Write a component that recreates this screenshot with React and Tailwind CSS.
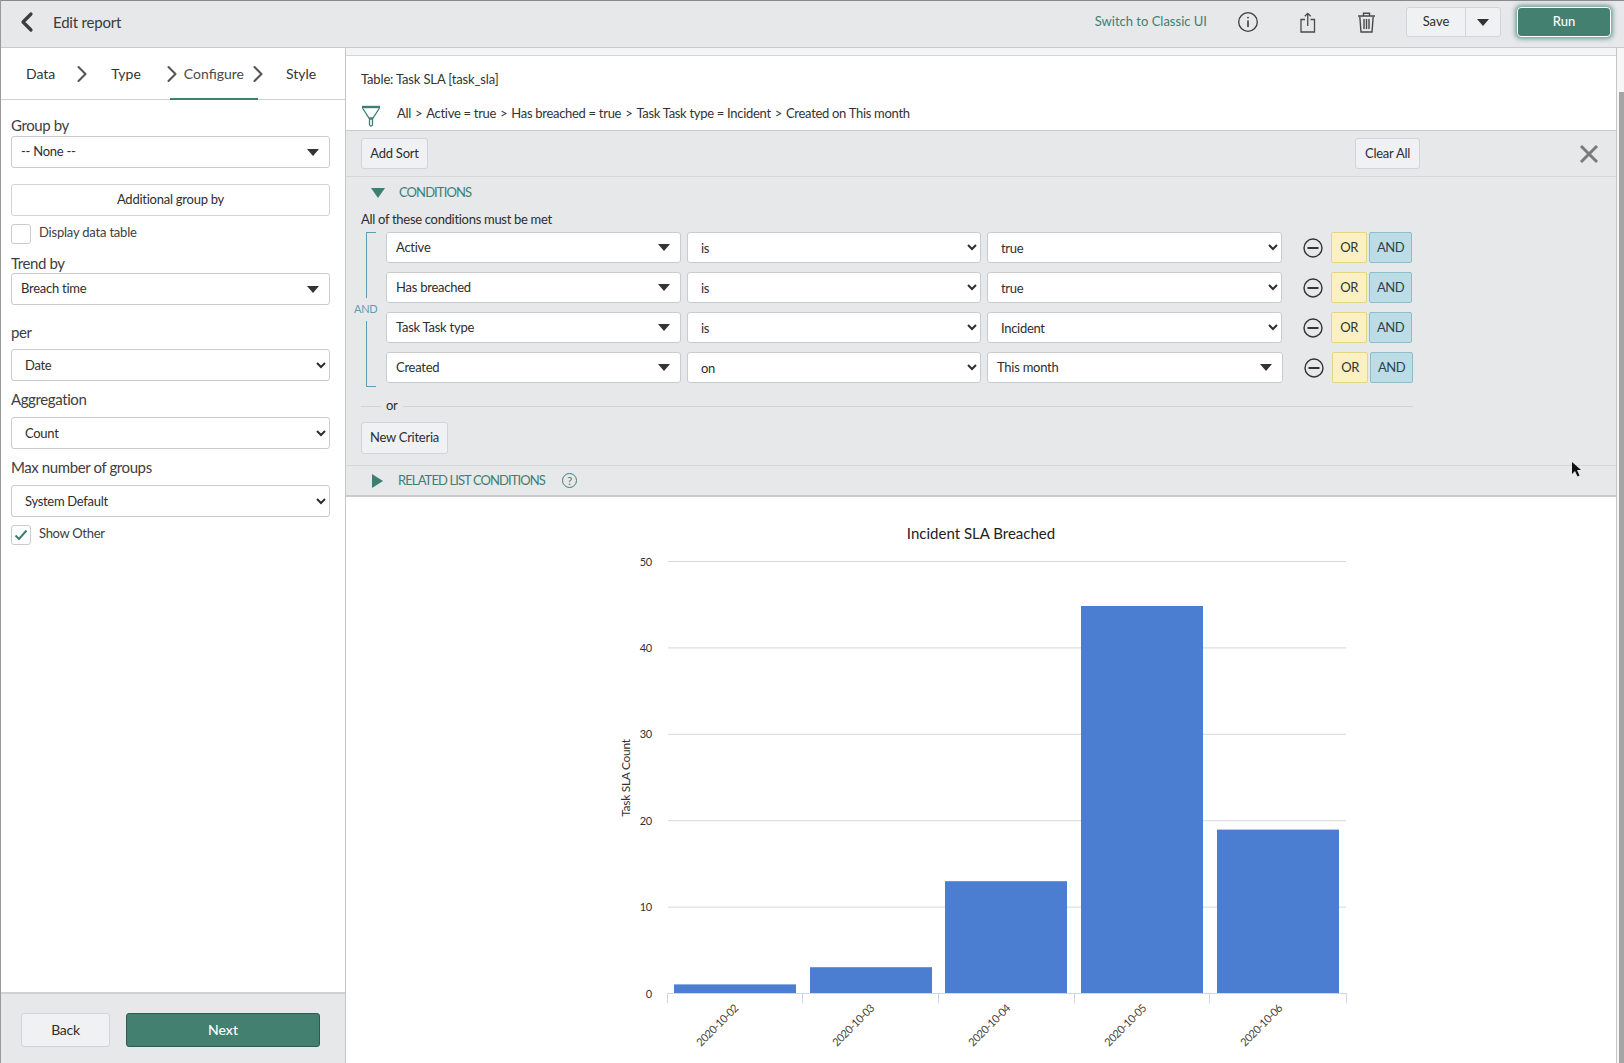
import { ChevronLeft, ChevronRight } from 'lucide-react';

// ── Helpers ───────────────────────────────────────────────────────────────────
const FONT = "font-['Lato','Noto_Sans',sans-serif]";

const Caret = () => (
  <span className="w-0 h-0 border-x-[6px] border-x-transparent border-t-[7px] border-t-[#333]" />
);

const ComboBox = ({ value, className = '' }) => (
  <div className={`flex items-center justify-between bg-white border border-[#c9cccf] rounded-[3px] pl-[9px] pr-[10px] h-[32px] text-[13px] tracking-[-0.25px] text-[#2e2e2e] ${className}`}>
    <span>{value}</span>
    <Caret />
  </div>
);

const NativeSelect = ({ value, className = '' }) => (
  <select
    defaultValue={value}
    className={`bg-white border border-[#c9cccf] rounded-[3px] pl-[9px] text-[13px] tracking-[-0.3px] text-[#2e2e2e] ${className}`}
  >
    <option>{value}</option>
  </select>
);

const Label = ({ children, className = '' }) => (
  <div className={`text-[15px] leading-[20px] tracking-[-0.4px] text-[#404040] ${className}`}>{children}</div>
);

const Btn = ({ children, className = '' }) => (
  <button className={`bg-[#f0f1f3] border border-[#d2d4d7] rounded-[3px] text-[13px] tracking-[-0.25px] text-[#2e2e2e] ${className}`}>
    {children}
  </button>
);

const CheckBox = ({ checked }) => (
  <span className="flex items-center justify-center w-[20px] h-[20px] bg-white border border-[#c9cccf] rounded-[3px]">
    {checked && (
      <svg width="14" height="12" viewBox="0 0 14 12" fill="none" stroke="#3f7f72" strokeWidth="2">
        <path d="M1.5 6.5 5 10l7.5-8.5" />
      </svg>
    )}
  </span>
);

const TabChevron = ({ className = '' }) => (
  <ChevronRight className={`w-[28px] h-[28px] -mx-[4px] text-[#555] ${className}`} strokeWidth={1.8} />
);

// ── Top bar icons ─────────────────────────────────────────────────────────────
const InfoIcon = () => (
  <svg width="22" height="22" viewBox="0 0 22 22" fill="none" stroke="#3c3c3c" strokeWidth="1.3">
    <circle cx="11" cy="11" r="9.3" />
    <path d="M11 9.5v6.5" strokeWidth="1.6" />
    <circle cx="11" cy="6.6" r="0.9" fill="#3c3c3c" stroke="none" />
  </svg>
);

const ShareIcon = () => (
  <svg width="16" height="21" viewBox="0 0 16 21" fill="none" stroke="#4a4a4a" strokeWidth="1.3">
    <path d="M5 7.5H1v12.5h13.5V7.5h-4" />
    <path d="M7.75 14V1.5M4.8 4.2l2.95-2.9 2.95 2.9" />
  </svg>
);

const TrashIcon = () => (
  <svg width="19" height="21" viewBox="0 0 19 21" fill="none" stroke="#4a4a4a" strokeWidth="1.4">
    <path d="M1 4h17M6.5 4V1.3h6V4" />
    <path d="M2.8 4.5 4 20h11l1.2-15.5" />
    <path d="M7 7v10M9.5 7v10M12 7v10" />
  </svg>
);

const FilterIcon = () => (
  <svg width="20" height="22" viewBox="0 0 20 22" fill="none" stroke="#3f7f72" strokeWidth="1.3">
    <path d="M1 2h18" strokeWidth="2.4" />
    <path d="M1.5 3 8 13h4l6.5-10" />
    <path d="M8.5 14h3v5.5a1.5 1.5 0 0 1-3 0z" />
  </svg>
);

const RemoveIcon = () => (
  <svg width="20" height="20" viewBox="0 0 20 20" fill="none" stroke="#333" strokeWidth="1.4">
    <circle cx="10" cy="10" r="9" />
    <path d="M4.5 10h11" strokeWidth="2" />
  </svg>
);

// ── Chart ─────────────────────────────────────────────────────────────────────
const BASE = 496;
const bars = [
  { x: 328, w: 122, v: 1, label: '2020-10-02', tx: 386 },
  { x: 464, w: 122, v: 3, label: '2020-10-03', tx: 522 },
  { x: 599, w: 122, v: 13, label: '2020-10-04', tx: 658 },
  { x: 735, w: 122, v: 45, label: '2020-10-05', tx: 794 },
  { x: 871, w: 122, v: 19, label: '2020-10-06', tx: 930 },
];

const Chart = () => (
  <svg width="1270" height="566" viewBox="0 0 1270 566" className="block">
    <text x="635" y="42" textAnchor="middle" fontSize="15" fill="#222">Incident SLA Breached</text>
    {[50, 40, 30, 20, 10].map((t) => (
      <line key={t} x1="322" x2="1000" y1={BASE + 0.5 - t * 8.64} y2={BASE + 0.5 - t * 8.64} stroke="#d4d7dc" />
    ))}
    {[50, 40, 30, 20, 10, 0].map((t) => (
      <text key={t} x="306" y={BASE + 4.5 - t * 8.64} textAnchor="end" fontSize="11" letterSpacing="-0.2" fill="#333">{t}</text>
    ))}
    <text transform="translate(284 281) rotate(-90)" textAnchor="middle" fontSize="12" letterSpacing="-0.3" fill="#333">Task SLA Count</text>
    {bars.map((b) => (
      <rect key={b.x} x={b.x} y={BASE - b.v * 8.6} width={b.w} height={b.v * 8.6} fill="#4b7ed1" />
    ))}
    <line x1="321" x2="1000" y1={BASE + 0.5} y2={BASE + 0.5} stroke="#ccd6eb" />
    {[321, 456, 592, 728, 863, 1000].map((x) => (
      <line key={x} x1={x + 0.5} x2={x + 0.5} y1={BASE} y2={BASE + 10} stroke="#ccd6eb" />
    ))}
    {bars.map((b) => (
      <text key={b.label} transform={`translate(${b.tx + 7} 512) rotate(-45)`} textAnchor="end" fontSize="11" letterSpacing="-0.55" fill="#444">
        {b.label}
      </text>
    ))}
  </svg>
);

// ── Condition rows ────────────────────────────────────────────────────────────
const rows = [
  { field: 'Active', op: 'is', value: 'true' },
  { field: 'Has breached', op: 'is', value: 'true' },
  { field: 'Task Task type', op: 'is', value: 'Incident' },
  { field: 'Created', op: 'on', value: 'This month', combo: true },
];

const crumbs = ['All', 'Active = true', 'Has breached = true', 'Task Task type = Incident', 'Created on This month'];

const ConditionRow = ({ row }) => (
  <div className="flex items-center h-[31px]">
    <ComboBox value={row.field} className="w-[295px] !h-[31px]" />
    <NativeSelect value={row.op} className="w-[294px] h-[31px] ml-[6px]" />
    {row.combo
      ? <ComboBox value={row.value} className="w-[296px] !h-[31px] ml-[6px]" />
      : <NativeSelect value={row.value} className="w-[295px] h-[31px] ml-[6px]" />}
    <span className="ml-[21px] mr-[8px] flex"><RemoveIcon /></span>
    <button className="w-[36px] h-[31px] bg-[#faf0c3] border border-[#e6d67f] rounded-[2px] text-[13px] tracking-[-0.5px] text-[#333]">OR</button>
    <button className="w-[43px] h-[31px] ml-[2px] bg-[#bcdce6] border border-[#8fbccb] rounded-[2px] text-[13px] tracking-[-0.5px] text-[#2d4450]">AND</button>
  </div>
);

// ── Page ──────────────────────────────────────────────────────────────────────
export default function App() {
  return (
    <div className={`h-[1063px] w-[1624px] flex flex-col overflow-hidden bg-white border-l border-[#9a9a9a] ${FONT}`}>

      {/* Top bar */}
      <div className="h-[48px] shrink-0 flex items-center bg-[#e6e8ea] border-t border-t-[#8a8a8a] border-b border-b-[#c8cacc] pr-[13px] pb-[4px]">
        <ChevronLeft className="w-[32px] h-[32px] ml-[10px] text-[#3c3c3c]" strokeWidth={2.4} />
        <span className="ml-[10px] text-[15px] tracking-[-0.2px] text-[#3a3a3a]">Edit report</span>
        <span className="ml-auto text-[13px] text-[#3f7f72]">Switch to Classic UI</span>
        <span className="ml-[30px] flex"><InfoIcon /></span>
        <span className="ml-[41px] flex"><ShareIcon /></span>
        <span className="ml-[41px] flex"><TrashIcon /></span>
        <div className="ml-[30px] flex w-[95px] h-[30px] bg-[#f0f1f3] border border-[#d2d4d7] rounded-[3px] text-[13px] text-[#2e2e2e]">
          <span className="w-[59px] flex items-center justify-center border-r border-[#d2d4d7]">Save</span>
          <span className="flex-1 flex items-center justify-center"><Caret /></span>
        </div>
        <button className="ml-[16px] w-[94px] h-[30px] bg-[#43806f] border border-white rounded-[4px] text-[13px] font-medium text-white shadow-[0_0_4px_2px_rgba(67,128,111,0.7)]">
          Run
        </button>
      </div>

      <div className="flex-1 flex min-h-0">

        {/* Left pane */}
        <div className="w-[345px] shrink-0 flex flex-col border-r border-[#c4c6c8]">
          <div className="h-[52px] shrink-0 flex items-center border-b border-[#cfd1d3] text-[14px] text-[#333] relative">
            <span className="ml-[25px]">Data</span>
            <TabChevron className="ml-[13px]" />
            <span className="ml-[19px]">Type</span>
            <TabChevron className="ml-[17px]" />
            <span className="ml-[2px] text-[#4a4a4a]">Configure</span>
            <TabChevron className="ml-[0px]" />
            <span className="ml-[18px]">Style</span>
            <div className="absolute left-[169px] bottom-[-1px] w-[88px] h-[2px] bg-[#3f7f72]" />
          </div>

          <div className="flex-1 pl-[10px] pr-[15px] pt-[15px]">
            <Label>Group by</Label>
            <ComboBox value="-- None --" className="mt-[1px]" />
            <Btn className="w-full h-[32px] mt-[16px] !bg-white">Additional group by</Btn>
            <div className="flex items-center gap-[8px] mt-[8px] text-[13px] tracking-[-0.2px] text-[#404040]">
              <CheckBox /> <span className="-mt-[3px]">Display data table</span>
            </div>
            <Label className="mt-[9px]">Trend by</Label>
            <ComboBox value="Breach time" />
            <Label className="mt-[17px]">per</Label>
            <NativeSelect value="Date" className="w-full h-[32px] mt-[7px]" />
            <Label className="mt-[8px]">Aggregation</Label>
            <NativeSelect value="Count" className="w-full h-[32px] mt-[8px]" />
            <Label className="mt-[8px]">Max number of groups</Label>
            <NativeSelect value="System Default" className="w-full h-[32px] mt-[8px]" />
            <div className="flex items-center gap-[8px] mt-[8px] text-[13px] tracking-[-0.3px] text-[#404040]">
              <CheckBox checked /> <span className="-mt-[3px]">Show Other</span>
            </div>
          </div>

          <div className="h-[71px] shrink-0 flex items-center gap-[16px] pl-[20px] pt-[2px] bg-[#e6e8ea] border-t-2 border-[#cfd1d3]">
            <Btn className="w-[89px] h-[34px] !text-[14px]">Back</Btn>
            <button className="w-[194px] h-[34px] bg-[#43806f] border border-[#2c5c50] rounded-[3px] text-[14px] font-medium text-white">Next</button>
          </div>
        </div>

        {/* Main pane */}
        <div className="flex-1 min-w-0 flex flex-col">
          <div className="h-[8px] shrink-0 bg-[#f3f4f5] border-b border-[#d4d6d8]" />
          <div className="h-[75px] shrink-0 border-b border-[#c8cacc] pl-[15px]">
            <div className="pt-[13px] text-[13px] leading-[20px] tracking-[-0.15px] text-[#333]">Table: Task SLA [task_sla]</div>
            <div className="flex items-center mt-[16px] text-[13px] tracking-[-0.3px] text-[#333]">
              <FilterIcon />
              <div className="ml-[16px] -mt-[4px] flex">
                {crumbs.map((c, i) => (
                  <span key={c}>
                    {i > 0 && <span className="mx-[4px]">&gt;</span>}
                    {c}
                  </span>
                ))}
              </div>
            </div>
          </div>

          {/* Filter panel */}
          <div className="h-[366px] shrink-0 bg-[#e6e8ea] border-b-2 border-[#c8cacc] flex flex-col text-[13px] tracking-[-0.3px] text-[#2e2e2e]">
            <div className="h-[46px] shrink-0 flex items-center justify-between pl-[15px] pr-[17px] border-b border-[#d4d6d8]">
              <Btn className="w-[67px] h-[31px]">Add Sort</Btn>
              <div className="flex items-center">
                <Btn className="w-[65px] h-[31px] mr-[159px]">Clear All</Btn>
                <svg width="20" height="20" viewBox="0 0 20 20" stroke="#7a7a7a" strokeWidth="3">
                  <path d="M2 2l16 16M18 2 2 18" />
                </svg>
              </div>
            </div>

            <div className="h-[288px] shrink-0 pl-[15px] relative">
              <div className="flex items-center h-[31px]">
                <span className="ml-[10px] w-0 h-0 border-x-[7px] border-x-transparent border-t-[10px] border-t-[#3f7f72]" />
                <span className="ml-[14px] text-[13px] tracking-[-0.9px] text-[#3f7f72]">CONDITIONS</span>
              </div>
              <div className="leading-[20px] mt-[1px]">All of these conditions must be met</div>

              <div className="flex mt-[3px]">
                <div className="w-[25px] shrink-0 relative flex flex-col items-start h-[155px] -ml-[7px]">
                  <div className="ml-[12px] w-[10px] h-[66px] border-l border-t border-[#5f9db5]" />
                  <div className="h-[23px] flex items-center text-[11px] text-[#5f9db5]">AND</div>
                  <div className="ml-[12px] w-[10px] h-[66px] border-l border-b border-[#5f9db5]" />
                </div>
                <div className="ml-[7px] flex flex-col gap-[9px]">
                  {rows.map((r) => <ConditionRow key={r.field} row={r} />)}
                </div>
              </div>

              <div className="flex items-center w-[1052px] mt-[9px] h-[20px]">
                <div className="w-[20px] h-px bg-[#d0d2d4]" />
                <span className="mx-[5px]">or</span>
                <div className="flex-1 h-px bg-[#d0d2d4]" />
              </div>
              <Btn className="w-[87px] h-[32px] mt-[6px]">New Criteria</Btn>
            </div>

            <div className="flex-1 flex items-center border-t border-[#d4d6d8] pl-[26px]">
              <span className="w-0 h-0 border-y-[7px] border-y-transparent border-l-[11px] border-l-[#3f7f72]" />
              <span className="ml-[15px] text-[13px] tracking-[-0.9px] text-[#3f7f72]">RELATED LIST CONDITIONS</span>
              <span className="ml-[17px] w-[15px] h-[15px] rounded-full border border-[#3f7f72] flex items-center justify-center text-[11px] leading-none text-[#3f7f72]">?</span>
            </div>
          </div>

          <Chart />
        </div>

        {/* Scrollbar */}
        <div className="w-[8px] shrink-0 bg-[#f6f6f6] border-l border-[#c4c6c8] pt-[44px]">
          <div className="ml-auto w-[5px] h-full bg-[#a5a5a5]" />
        </div>
      </div>

      {/* Mouse cursor */}
      <svg className="absolute left-[1571px] top-[461px]" width="11" height="17" viewBox="0 0 11 17">
        <path d="M1 1v12l3-3 2.5 5.5 2-1L6 9h4z" fill="#111" />
      </svg>
    </div>
  );
}
